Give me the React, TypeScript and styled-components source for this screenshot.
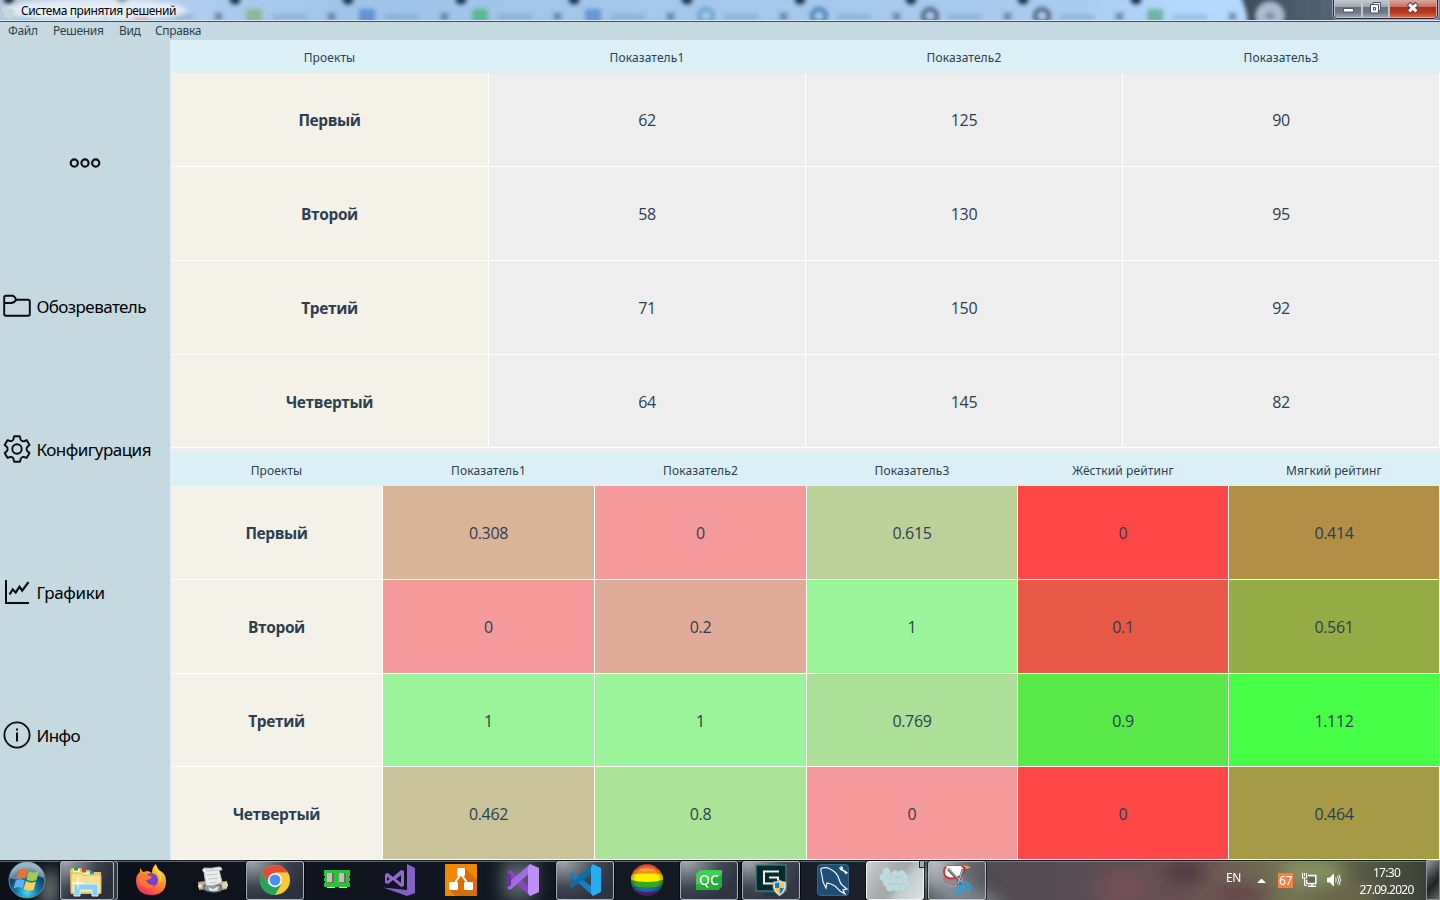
import React from 'react';
import styled, { createGlobalStyle } from 'styled-components';

const uiFont = '"Noto Sans", "Open Sans", sans-serif';

const GlobalStyle = createGlobalStyle`
  * { box-sizing: border-box; }
  html, body { margin: 0; padding: 0; }
  body { width: 1440px; height: 900px; overflow: hidden; font-family: ${uiFont}; }
  svg { display: block; }
`;

const Desktop = styled.div`
  display: flex;
  flex-direction: column;
  width: 1440px;
  height: 900px;
  overflow: hidden;
  background: #eeeeee;
`;

/* ---------- Title bar ---------- */

const TitleBar = styled.header`
  position: relative;
  display: flex;
  justify-content: space-between;
  flex: 0 0 22px;
  overflow: hidden;
  border-bottom: 1px solid #3f5266;
`;

const Glass = styled.svg`
  position: absolute;
  inset: 0;
`;

const TitleCaption = styled.div`
  position: relative;
  display: flex;
  align-items: center;
  gap: 5px;
  height: 22px;
  padding-left: 1px;
  font: 12px/22px ${uiFont};
  letter-spacing: -0.42px;
  color: #000;
  text-shadow: 0 0 6px #fff, 0 0 10px #fff;
`;

const WindowButtons = styled.div`
  position: relative;
  display: flex;
  width: 105px;
  height: 19px;
  margin-right: 2px;
  border: 1px solid #252c36;
  border-top: 0;
  border-radius: 0 0 5px 5px;
  box-shadow: 0 0 0 1px rgba(220, 230, 240, 0.5);
  overflow: hidden;
`;

const WindowButton = styled.div<{ $width: number; $danger?: boolean }>`
  display: flex;
  align-items: flex-start;
  justify-content: center;
  width: ${(p) => p.$width}px;
  height: 18px;
  border: 1px solid ${(p) => (p.$danger ? '#e1a79d' : '#c0c8d1')};
  border-top: 0;
  box-shadow: 1px 0 0 #343d49;
  background: ${(p) =>
    p.$danger
      ? 'linear-gradient(#d8a89f 0, #c66f60 40%, #a72f1b 44%, #b83b22 75%, #d9674a 100%)'
      : 'linear-gradient(#c5cad1 0, #9da6b1 40%, #67727f 44%, #707c8b 75%, #99a5b3 100%)'};
`;

/* ---------- Menu ---------- */

const MenuBar = styled.nav`
  display: flex;
  flex: 0 0 18px;
  gap: 16px;
  padding-left: 8px;
  background: #c4dae0;
`;

const MenuItem = styled.span<{ $width: number }>`
  width: ${(p) => p.$width}px;
  white-space: nowrap;
  font: 12px/18px ${uiFont};
  letter-spacing: -0.33px;
  color: #2f3f50;
`;

/* ---------- Body ---------- */

const Workspace = styled.div`
  display: flex;
  flex: 0 0 820px;
`;

const Sidebar = styled.aside`
  display: flex;
  flex-direction: column;
  flex: 0 0 170px;
  padding-top: 51px;
  background: #c4dae0;
`;

const SidebarMore = styled.div`
  display: flex;
  align-items: center;
  justify-content: center;
  height: 143px;
`;

const SidebarItem = styled.div`
  display: flex;
  align-items: center;
  gap: 4.4px;
  height: 143px;
  padding-left: 2px;
  font: 17px/24px ${uiFont};
  color: #000;
`;

const SidebarLabel = styled.span<{ $spacing: number }>`
  letter-spacing: ${(p) => p.$spacing}px;
  white-space: nowrap;
  padding-top: 2px;
`;

const Content = styled.main`
  display: flex;
  flex-direction: column;
  gap: 5px;
  flex: 1;
  border-left: 1px solid #dcecf9;
  background: #eeeeee;
`;

const Table = styled.section<{ $columns: string; $rows: string }>`
  display: grid;
  grid-template-columns: ${(p) => p.$columns};
  grid-template-rows: ${(p) => p.$rows};
`;

const HeadCell = styled.div`
  display: flex;
  align-items: center;
  justify-content: center;
  padding: 2px 1px 0 0;
  background: #daf0f6;
  font: 12px/16px ${uiFont};
  letter-spacing: 0.1px;
  color: #2c3e50;
`;

const Cell = styled.div<{ $fill: string; $bold?: boolean }>`
  display: flex;
  align-items: center;
  justify-content: center;
  padding-top: 1px;
  border-right: 1px solid #fffffa;
  border-bottom: 1px solid #fffffa;
  background: ${(p) => p.$fill};
  font: ${(p) => (p.$bold ? '700 15.5px' : '400 16px')}/22px "Open Sans", ${uiFont};
  letter-spacing: ${(p) => (p.$bold ? -0.4 : -0.35)}px;
  color: #2c3e50;
`;

/* ---------- Taskbar ---------- */

const Taskbar = styled.footer`
  position: relative;
  display: flex;
  flex: 0 0 40px;
  overflow: hidden;
  background: #10151e;
`;

const StartSlot = styled.div`
  position: relative;
  flex: 0 0 60px;
`;

const TaskSlot = styled.div`
  position: relative;
  flex: 0 0 62px;
  height: 40px;
`;

const TaskButton = styled.div<{ $open?: boolean; $active?: boolean; $width?: number }>`
  width: ${(p) => p.$width ?? 58}px;
  height: 39px;
  margin-top: 1px;
  border-radius: 3px;
  border: 1px solid ${(p) => (p.$active ? '#f0f2f3' : p.$open ? 'rgba(205, 212, 220, 0.72)' : 'transparent')};
  box-shadow: ${(p) => (p.$open ? '0 0 0 1px rgba(0,0,0,.65)' : 'none')};
  background: ${(p) =>
    p.$active
      ? 'linear-gradient(125deg, #cfd0d1 0, #a9abad 38%, #a2a8aa 52%, #c3cdcf 68%, #dfe3e3 100%)'
      : p.$open
        ? 'radial-gradient(ellipse at 10% 0%, rgba(235,240,245,.66), rgba(150,160,175,.34) 48%, rgba(110,120,135,.3) 75%)'
        : 'none'};

  & > svg { margin: -2px 0 0 -1px; overflow: visible; }
`;

const StackEdge = styled.i`
  position: absolute;
  top: 1px;
  left: 54px;
  width: 4px;
  height: 39px;
  border: 1px solid #8d959d;
  border-left: 0;
  border-radius: 0 3px 3px 0;
  background: #313943;
`;

const CornerNotch = styled.i`
  position: absolute;
  top: 1px;
  left: 53px;
  width: 5px;
  height: 7px;
  border-left: 1px solid #22272b;
  border-bottom: 1px solid #22272b;
  background: #a4a9ab;
`;

const Tray = styled.div`
  position: relative;
  display: flex;
  align-items: center;
  margin-left: auto;
  color: #fff;
  font: 12px/17px ${uiFont};
  letter-spacing: -0.35px;
`;

const Language = styled.span`
  width: 31px;
  padding-bottom: 5px;
`;

const Arrow = styled.i`
  width: 9px;
  border: 4px solid transparent;
  border-top: 0;
  border-bottom-color: #fff;
  margin-top: 2px;
`;

const Temperature = styled.span`
  width: 15px;
  height: 15px;
  margin: 1px 8px 0 12px;
  background: #ff7f40;
  line-height: 16px;
  text-align: center;
`;

const TrayIcons = styled.div`
  display: flex;
  align-items: center;
  gap: 9px;
`;

const Clock = styled.time`
  display: flex;
  flex-direction: column;
  align-items: center;
  width: 66px;
  margin: 1px 6.5px 0 11.5px;
  letter-spacing: -0.72px;
`;

const ShowDesktop = styled.div`
  width: 14px;
  height: 40px;
  border: 1px solid #8c9196;
  background: linear-gradient(135deg, #969a9c 0, #33383b 45%, #202426 60%, #666 100%);
`;

/* ---------- Icons ---------- */

const LeafIcon = () => (
  <svg width="15" height="18" viewBox="0 0 15 18">
    <path d="M1 5l2 1 2-2 2 3 4-1 3 4-2 2v3l-4 2-4-2-1-4-2-2z" fill="#c2dcde" />
  </svg>
);

const MoreIcon = () => (
  <svg width="32" height="12" viewBox="0 0 32 12" fill="none" stroke="#080c0d" strokeWidth="2.1">
    <circle cx="5.3" cy="6" r="3.6" />
    <circle cx="16" cy="6" r="3.6" />
    <circle cx="26.7" cy="6" r="3.6" />
  </svg>
);

const FolderIcon = () => (
  <svg width="30" height="30" viewBox="0 0 30 30" fill="none" stroke="#080c0d" strokeWidth="1.9" strokeLinejoin="round">
    <path d="M2.2 12V6.6Q2.2 4.800 4 4.800h6.500Q12.400 4.800 14.200 8.800H26Q27.800 8.800 27.800 10.500v12.500Q27.800 24.800 26 24.800H4Q2.200 24.800 2.200 23z" />
    <path d="M2.200 12H9Q12.500 12 14.200 8.800" />
  </svg>
);

const GearIcon = () => (
  <svg width="30" height="30" viewBox="0 0 30 30" fill="none" stroke="#080c0d" strokeWidth="1.9" strokeLinejoin="round">
    <path d="M12.200 2.300h5.600l.8 3.200q.3 1.100 1.500 1.400l1 .4q1 .2 1.900-.4l1.600-.8 2.900 4.900-2 1.700q-.9.800-.9 2.300t.9 2.300l2 1.700-2.900 4.900-2.600-.9q-1-.4-1.900.2-1 .6-1.300 1.500l-.8 3h-5.800l-.8-3q-.3-1-1.300-1.500-.9-.6-1.900-.2l-2.600.9L2.700 19l2-1.700q.9-.8.9-2.300t-.9-2.300l-2-1.700 2.900-4.900 2.400.9q1.200.3 2.100-.3t1.300-1.400z" />
    <circle cx="15" cy="15" r="4.700" />
  </svg>
);

const ChartIcon = () => (
  <svg width="30" height="30" viewBox="0 0 30 30" fill="none" stroke="#080c0d" strokeWidth="2">
    <path d="M4 3v23H27" />
    <path d="M7.500 17.500l3.200-5 3 3 3.800-5.800 2.700 4 6.300-8.500" strokeWidth="2.200" />
  </svg>
);

const InfoIcon = () => (
  <svg width="30" height="30" viewBox="0 0 30 30" fill="none" stroke="#080c0d">
    <circle cx="15" cy="15" r="12.600" strokeWidth="1.800" />
    <path d="M15 12.500V21.500M15 8.500v2" strokeWidth="2" />
  </svg>
);

const IconCanvas = ({ children }: { children: React.ReactNode }) => (
  <svg width="58" height="40" viewBox="0 0 58 40">{children}</svg>
);

const StartOrb = () => (
  <svg width="60" height="40" viewBox="0 0 60 40">
    <defs>
      <radialGradient id="orb" cx=".5" cy=".85" r=".75">
        <stop offset="0" stopColor="#42dcf5" />
        <stop offset=".4" stopColor="#1377ac" />
        <stop offset=".75" stopColor="#123e66" />
        <stop offset="1" stopColor="#8fabb9" />
      </radialGradient>
    </defs>
    <circle cx="27" cy="20" r="18" fill="url(#orb)" stroke="#718b9a" />
    <path d="M10 18a17 16 0 0 1 34 0Q32 13 24 18 17 21 10 18z" fill="#a8c4d3" opacity=".5" />
    <path d="M18.500 11q5-4 9-1l-2.300 9q-4-2.500-9 0z" fill="#ef7330" />
    <path d="M28.800 11q5 3 10 0l-2.300 9q-5 2.500-10-.5z" fill="#a2cc4f" />
    <path d="M15.800 20.500q5-2.500 9 0l-2.300 8q-4-2.500-9 0z" fill="#5cb3ee" />
    <path d="M26 21q5 3 10 .5l-2.300 8.500q-5 2-10-1z" fill="#fdd052" />
  </svg>
);

const ExplorerIcon = () => (
  <IconCanvas>
    <path d="M10 10l2-2h9l1 2h8l1 2h10v22H11z" fill="#e6c766" />
    <path d="M13 9h7v3h9v2h10v5H13z" fill="#fff5bf" />
    <path d="M14 7.500h4v3h-4z" fill="#14a73d" />
    <path d="M22 9.500h4v3h-4z" fill="#db412b" />
    <path d="M30 11.500h4v3h-4z" fill="#268ad5" />
    <path d="M11 13h10l2 2h18v18H11z" fill="#f5df91" stroke="#d6b551" />
    <path d="M14 36V26q0-2 2-2h20q2 0 2 2v10h-6v-6H20v6z" fill="#8bd0ee" stroke="#d7f3fd" />
    <path d="M18 17v12M12 23h12" stroke="#fff" />
  </IconCanvas>
);

const FirefoxIcon = () => (
  <IconCanvas>
    <defs>
      <linearGradient id="fox" x1=".85" y1="0" x2=".3" y2="1">
        <stop stopColor="#ffed48" />
        <stop offset=".45" stopColor="#ff9a23" />
        <stop offset="1" stopColor="#f52864" />
      </linearGradient>
    </defs>
    <path d="M18 8l3 4 5-1 4 2q0-6 4-9 1 5 6 8 4 3 4 9 0 14-15 14-14 0-15-14 0-6 4-9z" fill="url(#fox)" />
    <circle cx="29" cy="20" r="7" fill="#7541ca" />
    <path d="M16 14q6-2 14 3-2 3-6 3 2 6 9 5-8 7-15-2z" fill="#ff7832" />
    <path d="M33 9q7 7 4 15 5-8-1-14z" fill="#ffe14d" />
  </IconCanvas>
);

const ScriptIcon = () => (
  <IconCanvas>
    <path d="M14 22l7-1 2 8-8 1zM34 22l9-1v8l-9 2z" fill="#b7a992" />
    <path d="M20 25h17v6q-8 3-17-1z" fill="#8f9a99" stroke="#4d5453" />
    <path d="M24 27l5 2 6-3-2 5h-7z" fill="#dfe5e4" />
    <path d="M20 8q7 1 15-1 3 0 3 3h-3l3 12q-8 5-16 3l-2-13q-3-1 0-4z" fill="#ebecec" stroke="#babdbe" />
    <path d="M22 11l12-1m-11 5l11-1m-10 5l10-1m-9 5l8-1" stroke="#c2c5c6" />
    <circle cx="16" cy="26" r="2" fill="#ede1c5" />
    <circle cx="41" cy="25" r="3" fill="#ddd2b7" />
  </IconCanvas>
);

const ChromeIcon = () => (
  <IconCanvas>
    <circle cx="29" cy="20" r="15" fill="#fbc933" />
    <path d="M16 12.500A15 15 0 0 1 42 12.500H29l-6.500 11.300z" fill="#df4b3f" />
    <path d="M16 12.500L22.500 24l6.500 3.500L35.500 24 29 35A15 15 0 0 1 16 12.500z" fill="#21a462" />
    <circle cx="29" cy="20" r="7" fill="#fff" />
    <circle cx="29" cy="20" r="5.500" fill="#4b8cf6" />
  </IconCanvas>
);

const BoardIcon = () => (
  <IconCanvas>
    <path d="M16 10h26v6h-1v2h1v3h-1v2h1v4H16v-4h1v-2h-1v-3h1v-2h-1z" fill="#2bc33e" />
    <path d="M20 13h6v10h-6zM32 13h6v10h-6z" fill="#756b65" />
    <path d="M19 13h5v9h-5zM31 13h5v9h-5z" fill="#d1bcb1" />
    <path d="M19 27.500h8m4 0h8" stroke="#ffe64a" />
  </IconCanvas>
);

const VisualStudioOldIcon = () => (
  <IconCanvas>
    <path d="M37 4l8 4v25l-8 3-24-8.500 24 2.500z" fill="#8661c5" />
    <path fillRule="evenodd" d="M15 14l3-1 5 4 8-7 3 1v15l-3 1-8-7-5 4-3-1zm2 3v4l3-2zm9 2l5 4v-8z" fill="#9269cf" />
  </IconCanvas>
);

const DiagramIcon = () => (
  <IconCanvas>
    <rect x="13" y="4" width="32" height="32" rx="1" fill="#f08705" />
    <path d="M33 8l12 12v16H23l-6-7 5-8 7-6z" fill="#d86d09" />
    <path d="M29 14l-7 10m7-10l7 10" stroke="#fff" strokeWidth="2" />
    <rect x="25" y="8" width="8" height="8" rx="1" fill="#fff" />
    <rect x="17" y="22" width="9" height="8" rx="1" fill="#fff" />
    <rect x="32" y="22" width="9" height="8" rx="1" fill="#fff" />
  </IconCanvas>
);

const VisualStudioIcon = () => (
  <IconCanvas>
    <path d="M13 12l3-2 22 19-2 7-19-17-4 4z" fill="#8746bf" />
    <path d="M13 28l3 2 22-19-2-7-23 20z" fill="#a36be3" />
    <path d="M13 12l4 3v10l-4 3z" fill="#68339e" />
    <path d="M36 4l9 4v24l-9 4-2-3V7z" fill="#bd91f4" />
  </IconCanvas>
);

const CodeIcon = () => (
  <IconCanvas>
    <path d="M13 14.500l2.500-2.500L38 28l-1 8z" fill="#1181ca" />
    <path d="M13 25.500l2.500 2.500L38 12l-1-8z" fill="#0a6eae" />
    <path d="M37 4l8 4v24l-8 4-2-3V7z" fill="#27aef2" />
  </IconCanvas>
);

const RainbowIcon = () => (
  <IconCanvas>
    <defs>
      <clipPath id="ball"><circle cx="29" cy="20" r="16" /></clipPath>
      <radialGradient id="ballShade">
        <stop offset=".7" stopColor="#000" stopOpacity="0" />
        <stop offset="1" stopColor="#000" stopOpacity=".3" />
      </radialGradient>
    </defs>
    <g clipPath="url(#ball)">
      <path d="M13 4h32v7H13z" fill="#fa3c1f" />
      <path d="M13 10q16-3 32 0v8H13z" fill="#ff8e15" />
      <path d="M13 14.500q16-2 32 0v8H13z" fill="#fff000" />
      <path d="M13 20q16 4 32 0v7q-16 4-32 0z" fill="#3da816" />
      <path d="M13 25q16 5 32 0v6q-16 5-32 0z" fill="#176daa" />
      <path d="M13 29q16 6 32 0v8H13z" fill="#5b2183" />
      <circle cx="29" cy="20" r="16" fill="url(#ballShade)" />
    </g>
    <ellipse cx="29" cy="8" rx="9" ry="3" fill="#fff" opacity=".2" />
  </IconCanvas>
);

const QtIcon = () => (
  <IconCanvas>
    <path d="M20 10h22v16l-4 4H16V14z" fill="#41cd52" />
    <path d="M16 30v-5L42 15v11l-4 4z" fill="#25ae38" />
    <text x="29" y="25" textAnchor="middle" fill="#fff" fontFamily="Noto Sans" fontSize="14.500" fontWeight="500" textLength="20" lengthAdjust="spacingAndGlyphs">QC</text>
  </IconCanvas>
);

const MonitorIcon = () => (
  <IconCanvas>
    <rect x="14" y="5" width="30" height="26" fill="#012d32" stroke="#547b7d" strokeWidth="1.200" />
    <path d="M22 34.500h14" stroke="#0c3c42" strokeWidth="2" />
    <path d="M37 11.500H22v12h14v-6H27" fill="none" stroke="#f2f0db" strokeWidth="2" />
    <path d="M31 22q4 0 6.500-2 3 2 6.500 2v6q-1 5-6.500 8-5-3-6.500-8z" fill="#e1e6e8" stroke="#849096" />
    <path d="M33 23q3 0 4.500-1v6H33zM37.500 28H42q-1 4-4.500 6z" fill="#2475c7" />
    <path d="M37.500 22q2 1 4.500 1v5h-4.500zM33 28h4.500v6Q34 32 33 28z" fill="#f7c831" />
  </IconCanvas>
);

const DolphinIcon = () => (
  <IconCanvas>
    <rect x="13.500" y="4.500" width="31" height="31" rx="3" fill="#1d4f76" stroke="#36678a" />
    <path d="M17 8.500q5-2 9 .5 7 3 9 10 1 4 3 6l5 4-4 1 2 4-5-3-5-5-4-2-4-1-1 5-3-6-1-6-1-5z" fill="none" stroke="#edf4f7" strokeWidth="1.200" />
    <path d="M36 6.500q2-1 3 1v2l5 3-2 2-3-3.500-3-1-1-3 2 1z" fill="#fff" />
  </IconCanvas>
);

const hexes = [[20.5, 11.500], [17.300, 17.200], [23.900, 17.200], [29, 14], [35.600, 14], [21, 22.800], [27.400, 20.500], [33.800, 20.500], [38.700, 17.500], [40, 23.500], [24, 27.500], [30.500, 27.500], [36.500, 27.500]];

const HexIcon = () => (
  <IconCanvas>
    {hexes.map(([x, y]) => (
      <path key={`${x}-${y}`} d={`M${x} ${y - 4.200}l3.700 2.100v4.200l-3.700 2.100-3.700-2.100v-4.200z`} fill="#bfdadd" stroke="#adcbd0" strokeWidth=".5" />
    ))}
  </IconCanvas>
);

const SnipIcon = () => (
  <IconCanvas>
    <ellipse cx="24.500" cy="19" rx="10" ry="7.500" fill="#96858a" stroke="#c19699" />
    <path d="M16 11q0-4 5-4.500h14q3 3 0 7-4 5-13 5-6-1-6-7.500z" fill="#fff" stroke="#d62b2c" strokeWidth="1.800" />
    <path d="M18.500 7h15" stroke="#fff" strokeWidth="2" />
    <path d="M35 5l8 2-4 2z" fill="#e4ab63" />
    <path d="M20 9l15 16M35 9l-5 16" stroke="#59656e" strokeWidth="2.600" />
    <path d="M20.500 9l14 14M34.500 10l-4.500 14" stroke="#d9dfe2" strokeWidth=".8" />
    <ellipse cx="31" cy="30" rx="2.300" ry="4.500" transform="rotate(12 31 30)" fill="none" stroke="#25a3e0" strokeWidth="2" />
    <ellipse cx="38.500" cy="26" rx="4.600" ry="2.700" transform="rotate(40 38.500 26)" fill="none" stroke="#25a3e0" strokeWidth="2" />
  </IconCanvas>
);

const NetworkIcon = () => (
  <svg width="16" height="18" viewBox="0 0 16 18" fill="none" stroke="#fff">
    <path d="M7 4.500h7.800v8H5.500V9M7 15.300h8M11 13v2" strokeWidth="1.500" />
    <path d="M1.500 2v5h4V2M3.500 2v3M3.500 7v7.500H6" />
    <path d="M7 6h7v5.500H7z" fill="#5d6b62" stroke="none" />
  </svg>
);

const SpeakerIcon = () => (
  <svg width="16" height="16" viewBox="0 0 16 16" fill="none" stroke="#fff">
    <path d="M1.500 6h2.500l3.500-4v12l-3.500-4H1.500z" fill="#fff" />
    <path d="M9.500 5.500q1.500 2.500 0 5M11.500 4q2.500 4 0 8M13 2.500q3 5.500 0 11" strokeWidth=".9" />
  </svg>
);

/* ---------- Backdrops ---------- */

const tabs = [
  { x: 28, color: '#83b7d4' }, { x: 141, color: '#c0304a' }, { x: 254, color: '#80b070' },
  { x: 367, color: '#4a7ed0' }, { x: 480, color: '#3cb371' }, { x: 593, color: '#4d83d2' },
  { x: 706, color: '#5c9ec8', ring: true }, { x: 819, color: '#386bab', ring: true },
  { x: 930, color: '#394b60', ring: true }, { x: 1042, color: '#394b60', ring: true },
  { x: 1155, color: '#51a580' },
];

const TitleBackdrop = () => (
  <Glass width="1440" height="21" viewBox="0 0 1440 21">
    <defs>
      <filter id="soft" x="-20%" y="-60%" width="140%" height="220%"><feGaussianBlur stdDeviation="2.200" /></filter>
      <linearGradient id="sky">
        <stop offset="0" stopColor="#b5c9dc" />
        <stop offset=".1" stopColor="#b4cfee" />
        <stop offset=".25" stopColor="#a0c3e9" />
        <stop offset=".75" stopColor="#aacbed" />
        <stop offset=".82" stopColor="#b4d8fe" />
      </linearGradient>
      <linearGradient id="dusk"><stop stopColor="#3d4c5e" /><stop offset="1" stopColor="#718295" /></linearGradient>
    </defs>
    <rect width="1440" height="21" fill="url(#sky)" />
    <g filter="url(#soft)">
      <path d="M1238-8q9 13 11 40h200V-8z" fill="url(#dusk)" />
      <circle cx="1270" cy="16" r="14" fill="#a9bdd3" />
      <path d="M1264 16h12m-6-6v12" stroke="#5c6b7c" strokeWidth="2" />
      {tabs.map((tab) => (
        <g key={tab.x}>
          <circle cx={tab.x - 19} cy="-1" r="5.500" fill="#1f344a" />
          {tab.ring
            ? <circle cx={tab.x} cy="16" r="7" fill="none" stroke={tab.color} strokeWidth="4" opacity=".85" />
            : <rect x={tab.x - 8} y="9" width="16" height="14" rx="3" fill={tab.color} opacity=".7" />}
          <path d={`M${tab.x + 18} 17h34`} stroke="#52749c" strokeWidth="5" opacity=".28" />
          <path d={`M${tab.x + 74} 13l7 7m0-7l-7 7`} stroke="#344c69" strokeWidth="2.500" opacity=".65" />
        </g>
      ))}
      <ellipse cx="95" cy="10" rx="92" ry="11" fill="#eef4fb" opacity=".75" />
    </g>
    <path d="M0 20.500h1440" stroke="#d9e7f5" />
  </Glass>
);

const TaskbarBackdrop = () => (
  <Glass width="1440" height="40" viewBox="0 0 1440 40">
    <defs>
      <filter id="haze" x="-20%" y="-100%" width="140%" height="300%"><feGaussianBlur stdDeviation="8" /></filter>
      <linearGradient id="bar">
        <stop offset="0" stopColor="#0c1019" /><stop offset=".5" stopColor="#141a24" />
        <stop offset=".6" stopColor="#1c212a" />
        <stop offset=".65" stopColor="#4d4b51" /><stop offset=".75" stopColor="#584e53" />
        <stop offset=".82" stopColor="#6b5054" /><stop offset=".9" stopColor="#747553" />
        <stop offset=".96" stopColor="#4e5340" /><stop offset="1" stopColor="#363a34" />
      </linearGradient>
    </defs>
    <rect width="1440" height="40" fill="url(#bar)" />
    <g filter="url(#haze)">
      <path d="M45 10l12 0 0 35H40z" fill="#9da6a7" opacity=".8" />
      <path d="M502 0h33v40h-33z" fill="#89939a" opacity=".6" />
      <path d="M910 8l30 0 70 40h-60z" fill="#a6b3b5" opacity=".65" />
      <ellipse cx="1120" cy="28" rx="28" ry="18" fill="#794f58" opacity=".7" />
      <ellipse cx="1185" cy="12" rx="20" ry="12" fill="#47353b" opacity=".8" />
      <ellipse cx="1240" cy="35" rx="30" ry="12" fill="#66424a" opacity=".8" />
      <ellipse cx="1313" cy="12" rx="32" ry="14" fill="#859060" />
      <ellipse cx="1350" cy="35" rx="25" ry="12" fill="#6c6848" />
    </g>
    <path d="M0 .5h1440" stroke="#171c24" />
    <path d="M0 1.500h1440" stroke="#8c949b" opacity=".65" />
  </Glass>
);

/* ---------- Data ---------- */

const names = ['Первый', 'Второй', 'Третий', 'Четвертый'];

const sourceHead = ['Проекты', 'Показатель1', 'Показатель2', 'Показатель3'];
const sourceRows = [[62, 125, 90], [58, 130, 95], [71, 150, 92], [64, 145, 82]];

const ratingHead = [...sourceHead, 'Жёсткий рейтинг', 'Мягкий рейтинг'];
const ratingRows: [string, string][][] = [
  [['0.308', '#d8b599'], ['0', '#f59a9a'], ['0.615', '#bbd199'], ['0', '#ff4747'], ['0.414', '#b28f45']],
  [['0', '#f59a9a'], ['0.2', '#e1ab99'], ['1', '#9af59a'], ['0.1', '#e85847'], ['0.561', '#95ac46']],
  [['1', '#9af59a'], ['1', '#9af59a'], ['0.769', '#addf99'], ['0.9', '#58e847'], ['1.112', '#47ff47']],
  [['0.462', '#cac399'], ['0.8', '#abe399'], ['0', '#f59a9a'], ['0', '#ff4747'], ['0.464', '#a69a46']],
];

const sections = [
  { label: 'Обозреватель', Icon: FolderIcon, spacing: -0.57 },
  { label: 'Конфигурация', Icon: GearIcon, spacing: -0.5 },
  { label: 'Графики', Icon: ChartIcon, spacing: -0.33 },
  { label: 'Инфо', Icon: InfoIcon, spacing: -0.6 },
];

const menu = [
  { label: 'Файл', width: 29 }, { label: 'Решения', width: 50 },
  { label: 'Вид', width: 20 }, { label: 'Справка', width: 48 },
];

const apps = [
  { Icon: ExplorerIcon, open: true, width: 54, stacked: true },
  { Icon: FirefoxIcon }, { Icon: ScriptIcon }, { Icon: ChromeIcon, open: true },
  { Icon: BoardIcon }, { Icon: VisualStudioOldIcon }, { Icon: DiagramIcon },
  { Icon: VisualStudioIcon }, { Icon: CodeIcon, open: true }, { Icon: RainbowIcon },
  { Icon: QtIcon, open: true }, { Icon: MonitorIcon, open: true }, { Icon: DolphinIcon },
  { Icon: HexIcon, open: true, active: true }, { Icon: SnipIcon, open: true },
];

export default function App() {
  return (
    <>
      <GlobalStyle />
      <Desktop>
        <TitleBar>
          <TitleBackdrop />
          <TitleCaption><LeafIcon />Система принятия решений</TitleCaption>
          <WindowButtons>
            <WindowButton $width={28}>
              <svg width="13" height="16"><rect x="1.500" y="8.500" width="10" height="3.500" fill="#fff" stroke="#535b68" /></svg>
            </WindowButton>
            <WindowButton $width={27}>
              <svg width="13" height="16" fill="#f7f7f7" stroke="#4d5563">
                <path d="M4 2.500h7.500v8H4z" /><path fillRule="evenodd" d="M1.500 4.500h8v8.500h-8zm3 3v2.500h2v-2.500z" />
              </svg>
            </WindowButton>
            <WindowButton $width={48} $danger>
              <svg width="14" height="16"><path d="M2.500 3.500l8.500 8.500m0-8.500l-8.500 8.500" stroke="#56454c" strokeWidth="5" /><path d="M3.200 4.200l7.200 7.200m0-7.200l-7.200 7.200" stroke="#fff" strokeWidth="3" /></svg>
            </WindowButton>
          </WindowButtons>
        </TitleBar>

        <MenuBar>
          {menu.map((m) => <MenuItem key={m.label} $width={m.width}>{m.label}</MenuItem>)}
        </MenuBar>

        <Workspace>
          <Sidebar>
            <SidebarMore><MoreIcon /></SidebarMore>
            {sections.map(({ label, Icon, spacing }) => (
              <SidebarItem key={label}><Icon /><SidebarLabel $spacing={spacing}>{label}</SidebarLabel></SidebarItem>
            ))}
          </Sidebar>
          <Content>
            <Table $columns="318px repeat(3, 317px)" $rows="33px repeat(3, 94px) 93px">
              {sourceHead.map((h) => <HeadCell key={h}>{h}</HeadCell>)}
              {sourceRows.map((row, r) => (
                <React.Fragment key={names[r]}>
                  <Cell $fill="#f4f1e8" $bold>{names[r]}</Cell>
                  {row.map((value, c) => <Cell key={c} $fill="#eeeeee">{value}</Cell>)}
                </React.Fragment>
              ))}
            </Table>
            <Table $columns="repeat(3, 212px) repeat(3, 211px)" $rows="33px repeat(2, 94px) repeat(2, 93px)">
              {ratingHead.map((h) => <HeadCell key={h}>{h}</HeadCell>)}
              {ratingRows.map((row, r) => (
                <React.Fragment key={names[r]}>
                  <Cell $fill="#f4f1e8" $bold>{names[r]}</Cell>
                  {row.map(([value, fill], c) => <Cell key={c} $fill={fill}>{value}</Cell>)}
                </React.Fragment>
              ))}
            </Table>
          </Content>
        </Workspace>

        <Taskbar>
          <TaskbarBackdrop />
          <StartSlot><StartOrb /></StartSlot>
          {apps.map(({ Icon, open, active, width, stacked }, i) => (
            <TaskSlot key={i}>
              {stacked && <StackEdge />}
              <TaskButton $open={open} $active={active} $width={width}><Icon /></TaskButton>
              {active && <CornerNotch />}
            </TaskSlot>
          ))}
          <Tray>
            <Language>EN</Language>
            <Arrow />
            <Temperature>67</Temperature>
            <TrayIcons><NetworkIcon /><SpeakerIcon /></TrayIcons>
            <Clock><span>17:30</span><span>27.09.2020</span></Clock>
            <ShowDesktop />
          </Tray>
        </Taskbar>
      </Desktop>
    </>
  );
}
